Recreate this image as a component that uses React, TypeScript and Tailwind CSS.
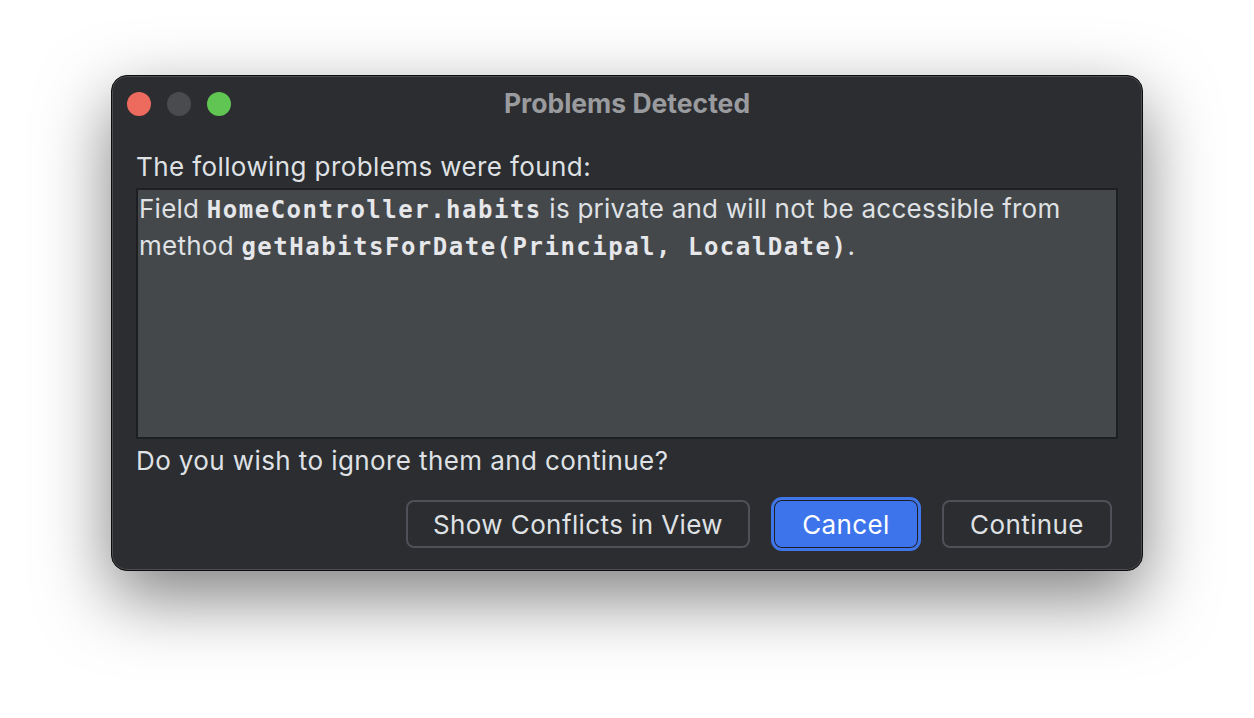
import React from 'react';

const ui = { fontFamily: 'Inter, "Noto Sans", sans-serif' };
const mono = { fontFamily: '"DejaVu Sans Mono", "Liberation Mono", monospace' };

function Code({ children }: { children: React.ReactNode }) {
  return (
    <span className="text-[24px] font-bold tracking-[1.5px] text-[#e6e7ea]" style={mono}>
      {children}
    </span>
  );
}

function DialogButton({
  children,
  primary,
  className,
}: {
  children: React.ReactNode;
  primary?: boolean;
  className?: string;
}) {
  if (primary) {
    return (
      <button
        type="button"
        className={
          'flex h-[48px] items-center justify-center rounded-[8px] border border-[#1e1f22] bg-[#3d74ec] text-[26px] tracking-[0.4px] text-white outline-[3px] outline-solid outline-[#3f76ea] ' +
          (className ?? '')
        }
      >
        {children}
      </button>
    );
  }
  return (
    <button
      type="button"
      className={
        'flex h-[48px] items-center justify-center rounded-[8px] border-2 border-[#4e5157] bg-[#2b2d30] text-[26px] tracking-[0.4px] text-[#dfe1e5] ' +
        (className ?? '')
      }
    >
      {children}
    </button>
  );
}

export default function App() {
  return (
    <div className="flex h-[718px] w-[1254px] justify-center bg-white pt-[75px]" style={ui}>
      <div className="flex h-[496px] w-[1032px] flex-col rounded-[16px] border border-[#0c0c0d] bg-[#2b2d30] shadow-[inset_0_0_0_1px_rgba(255,255,255,0.16),0_26px_70px_rgba(0,0,0,0.5)]">
        <div className="relative flex h-[56px] shrink-0 items-center justify-center">
          <div className="absolute left-[15px] top-[16px] flex gap-[16px]">
            <span className="h-[24px] w-[24px] rounded-full bg-[#ed6a5e]" />
            <span className="h-[24px] w-[24px] rounded-full bg-[#4a4b4e]" />
            <span className="h-[24px] w-[24px] rounded-full bg-[#61c554]" />
          </div>
          <span className="text-[26.5px] font-bold text-[#9a9b9e]">Problems Detected</span>
        </div>

        <div className="flex flex-1 flex-col px-[24px] text-[26px] tracking-[0.4px] text-[#dfe1e5]">
          <div className="mt-[20px] h-[30px] leading-[30px]">The following problems were found:</div>
          <div className="mt-[6px] h-[251px] border-2 border-[#1e1f22] bg-[#45484a] px-[1px] pt-[1px] leading-[36px] tracking-[0.25px]">
            <div>
              Field <Code>HomeController.habits</Code> is private and will not be accessible from
            </div>
            <div>
              method <Code>getHabitsForDate(Principal, LocalDate)</Code>.
            </div>
          </div>
          <div className="mt-[7px] h-[30px] leading-[30px]">Do you wish to ignore them and continue?</div>
          <div className="mt-[24px] flex justify-end gap-[21px] pr-[6px]">
            <DialogButton className="w-[344px]">Show Conflicts in View</DialogButton>
            <DialogButton primary className="mx-[3px] w-[144px]">
              Cancel
            </DialogButton>
            <DialogButton className="w-[170px]">Continue</DialogButton>
          </div>
        </div>
      </div>
    </div>
  );
}
